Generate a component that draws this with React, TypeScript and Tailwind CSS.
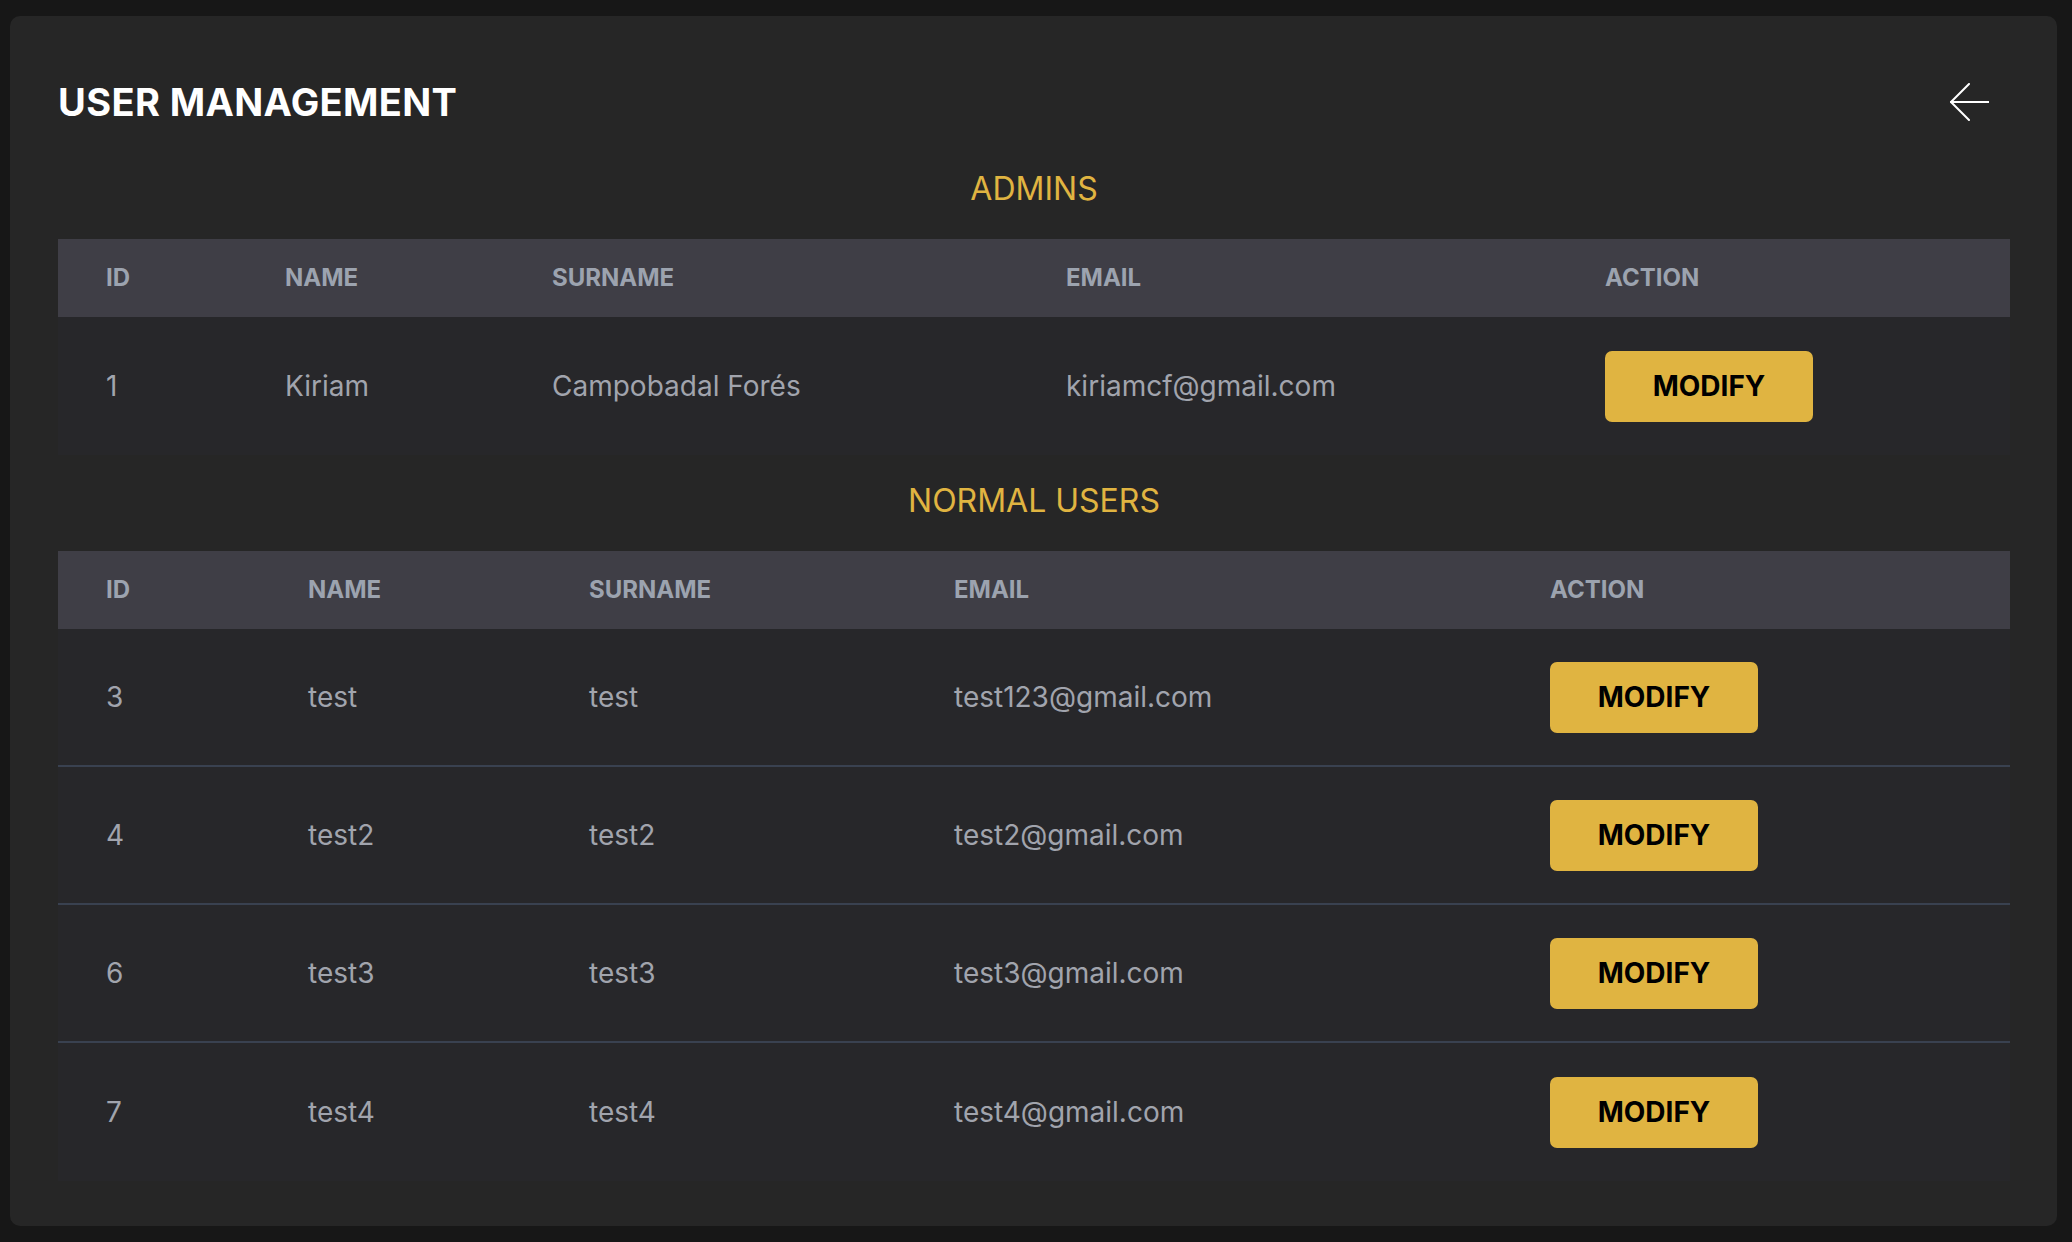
import React from "react";

type User = { id: number; name: string; surname: string; email: string };

const admins: User[] = [
  { id: 1, name: "Kiriam", surname: "Campobadal Forés", email: "kiriamcf@gmail.com" },
];

const users: User[] = [
  { id: 3, name: "test", surname: "test", email: "test123@gmail.com" },
  { id: 4, name: "test2", surname: "test2", email: "test2@gmail.com" },
  { id: 6, name: "test3", surname: "test3", email: "test3@gmail.com" },
  { id: 7, name: "test4", surname: "test4", email: "test4@gmail.com" },
];

function ModifyButton() {
  return (
    <button className="w-[208px] h-[71px] rounded-[7px] bg-[#e0b441] text-black text-[28px] font-bold leading-none">
      MODIFY
    </button>
  );
}

function UserTable({ rows, cols }: { rows: User[]; cols: string }) {
  return (
    <div className="bg-[#27272a]">
      <div className={`grid ${cols} pl-[48px] h-[78px] items-center bg-[#3f3e46] text-[24px] font-bold text-[#9ca3af]`}>
        <div>ID</div>
        <div>NAME</div>
        <div>SURNAME</div>
        <div>EMAIL</div>
        <div>ACTION</div>
      </div>
      {rows.map((u, i) => (
        <div
          key={u.id}
          className={`grid ${cols} pl-[48px] h-[138px] items-center text-[28px] text-[#a1a4ad] ${
            i < rows.length - 1 ? "border-b-2 border-[#394150]" : ""
          }`}
        >
          <div>{u.id}</div>
          <div>{u.name}</div>
          <div>{u.surname}</div>
          <div>{u.email}</div>
          <div>
            <ModifyButton />
          </div>
        </div>
      ))}
    </div>
  );
}

export default function App() {
  return (
    <div
      className="min-h-[1242px] w-[2072px] bg-[#171717] pt-[16px] pl-[10px] pr-[15px] pb-[16px]"
      style={{ fontFamily: "Inter, 'Noto Sans', sans-serif" }}
    >
      <div className="rounded-[10px] bg-[#262626] h-[1210px] pl-[48px] pr-[47px] pt-[62px]">
        <div className="flex items-center justify-between h-[48px]">
          <h1 className="text-[38px] font-bold text-white tracking-[0.01em] leading-none">USER MANAGEMENT</h1>
          <svg width="40" height="38" viewBox="0 0 40 38" fill="none" className="mr-[21px]">
            <path d="M20 1 L2 19 L20 37" stroke="white" strokeWidth="2" strokeLinecap="round" strokeLinejoin="round" />
            <path d="M2 19 H40" stroke="white" strokeWidth="2" strokeLinecap="round" />
          </svg>
        </div>
        <h2 className="mt-[43px] h-[40px] leading-[40px] text-center text-[32px] text-[#e0b441]">ADMINS</h2>
        <div className="mt-[30px]">
          <UserTable rows={admins} cols="grid-cols-[179px_267px_514px_539px_1fr]" />
        </div>
        <h2 className="mt-[26px] h-[40px] leading-[40px] text-center text-[32px] text-[#e0b441]">NORMAL USERS</h2>
        <div className="mt-[30px]">
          <UserTable rows={users} cols="grid-cols-[202px_281px_365px_596px_1fr]" />
        </div>
      </div>
    </div>
  );
}
